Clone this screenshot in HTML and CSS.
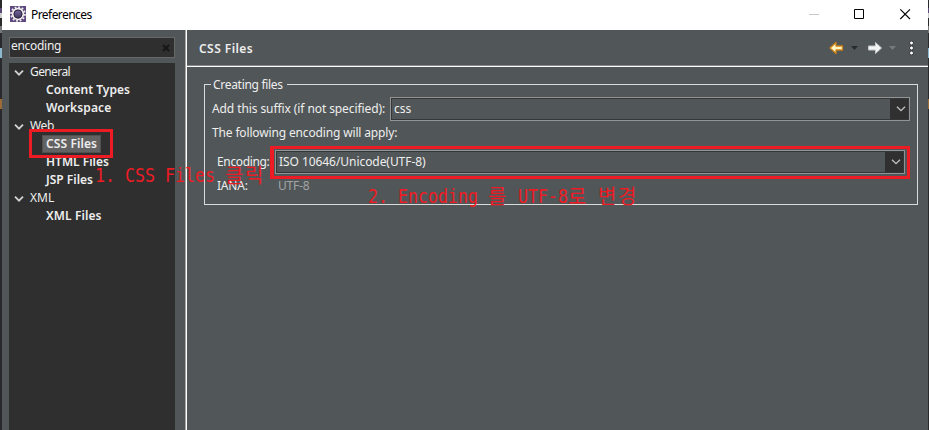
FILE: index.html
```
<!DOCTYPE html>
<html lang="ko">
<head>
<meta charset="utf-8">
<title>Preferences</title>
<link rel="stylesheet" href="styles.css">
</head>
<body>
<div class="window">
  <header class="titlebar">
    <svg class="app" width="16" height="16" viewBox="0 0 16 16">
      <defs><linearGradient id="g" x2="0" y2="1"><stop stop-color="#8070ac"/><stop offset="1" stop-color="#393050"/></linearGradient></defs>
      <rect width="16" height="16" fill="#5c487f"/>
      <circle cx="8" cy="8" r="6.8" fill="none" stroke="#eee" stroke-width="2" stroke-dasharray="1.8 1.76"/>
      <circle cx="8" cy="8" r="5.3" fill="url(#g)" stroke="#f3f1ee" stroke-width="1.7"/>
      <circle cx="8" cy="8" r="4" fill="none" stroke="#30283f"/>
    </svg>
    <span class="t title">Preferences</span>
    <svg class="controls" width="118" height="30" viewBox="0 0 118 30">
      <path d="M0 14.5h10" stroke="#c8c8c8"/>
      <path d="M45.500 9.500h9v9h-9z" fill="none" stroke="#000"/>
      <path d="M91.300 9.300l9.700 9.700M101 9.300l-9.700 9.700" stroke="#000" stroke-width="1.1"/>
    </svg>
  </header>
  <div class="content">
    <aside class="side">
      <div class="search"><span class="t query">encoding</span><svg width="8" height="8" viewBox="0 0 8 8"><path d="M1 1l6 6M7 1L1 7" stroke="#161616" stroke-width="1.8"/></svg></div>
      <nav class="tree">
        <div class="row"><svg class="chev" width="10" height="6" viewBox="0 0 10 6"><path d="M1 .7l4 4 4-4"/></svg><span class="t general">General</span></div>
        <div class="row leaf"><span class="t types">Content Types</span></div>
        <div class="row leaf"><span class="t workspace">Workspace</span></div>
        <div class="row"><svg class="chev" width="10" height="6" viewBox="0 0 10 6"><path d="M1 .7l4 4 4-4"/></svg><span class="t web">Web</span></div>
        <div class="row leaf"><div class="selected"><span class="t cssfiles">CSS Files</span></div></div>
        <div class="row leaf"><span class="t htmlfiles">HTML Files</span></div>
        <div class="row leaf"><span class="t jspfiles">JSP Files</span></div>
        <div class="row"><svg class="chev" width="10" height="6" viewBox="0 0 10 6"><path d="M1 .7l4 4 4-4"/></svg><span class="t xml">XML</span></div>
        <div class="row leaf"><span class="t xmlfiles">XML Files</span></div>
      </nav>
    </aside>
    <main class="page">
      <div class="head">
        <span class="t heading">CSS Files</span>
        <svg class="tools" width="88" height="18" viewBox="0 0 88 18">
          <path d="M1 9l6-5.500v3.500h6.500v4h-6.500v3.500z" fill="#fff3c4" stroke="#c98216" stroke-width="1.300" stroke-linejoin="round"/>
          <path d="M22 7h7l-3.500 4z" fill="#292b2c"/>
          <path d="M52.500 9l-6-5.500v3.500h-7v4h7v3.500z" fill="#f4f4f4" stroke="#c5c7c8" stroke-linejoin="round"/>
          <path d="M60 7h7l-3.500 4z" fill="#767a7d"/>
          <g fill="#fff" stroke="#333739"><circle cx="82.500" cy="4" r="2"/><circle cx="82.500" cy="9" r="2"/><circle cx="82.500" cy="14" r="2"/></g>
        </svg>
      </div>
      <section class="group">
        <div class="legend"><span class="t creating">Creating files</span></div>
        <div class="field suffix"><span class="t addlabel">Add this suffix (if not specified):</span><div class="combo first"><span class="t css">css</span><span class="drop"><svg width="10" height="6" viewBox="0 0 10 6"><path d="M1 .7l4 4 4-4"/></svg></span></div></div>
        <div class="note"><span class="t following">The following encoding will apply:</span></div>
        <div class="field enc"><span class="t enclabel">Encoding:</span><div class="combo second"><span class="t iso">ISO 10646/Unicode(UTF-8)</span><span class="drop"><svg width="10" height="6" viewBox="0 0 10 6"><path d="M1 .7l4 4 4-4"/></svg></span></div></div>
        <div class="iana"><span class="t ianalabel">IANA:</span><span class="t utf">UTF-8</span></div>
      </section>
    </main>
  </div>
</div>
<div class="mark markone"></div>
<div class="mark marktwo"></div>
<div class="callout one"><span class="latin w13">1. CSS Files </span><span class="hangul">클릭</span></div>
<div class="callout two"><span class="latin w12">2. Encoding </span><span class="hangul">를</span><span class="latin w6"> UTF-8</span><span class="hangul">로</span><span class="latin w1"> </span><span class="hangul">변경</span></div>
</body>
</html>
```
FILE: styles.css
```
* { box-sizing: border-box; }
body { margin: 0; width: 929px; height: 430px; overflow: hidden; background: linear-gradient(#292a2c 0 8px, #5b4a78 8px 13px, #ccc 13px 18px, #292a2c 18px 26px, #777 26px 33px, #292a2c 33px 48px, #8db9d0 48px 58px, #292a2c 58px 99px, #9b6b38 99px 109px, #292a2c 109px); font: 12px/18px "Noto Sans", "Noto Sans CJK KR", sans-serif; color: #eee; }
.window { margin: 0 1px 0 2px; height: 430px; background: #515658; display: flex; flex-direction: column; }
.t { white-space: pre; flex: none; display: block; }
svg { display: block; flex: none; }
.titlebar { height: 30px; background: #fff; color: #000; display: flex; align-items: center; padding-left: 8px; }
.app { margin-right: 5px; margin-top: -2px; }
.title { margin-top: -1px; letter-spacing: -.56px; }
.controls { margin-left: auto; margin-right: 1px; }
.content { flex: 1; display: flex; min-height: 0; }
.side { width: 183px; padding: 7px 10px 0 7px; display: flex; flex-direction: column; gap: 5px; }
.search { height: 21px; border: 1px solid #686868; background: #2f2f2f; display: flex; justify-content: space-between; align-items: center; padding: 0 4px 0 1px; }
.query { margin-top: -3px; letter-spacing: -.3px; }
.tree { flex: 1; background: #2f2f2f; }
.row { height: 18px; display: flex; align-items: center; padding-left: 5px; }
.row .t { margin-top: -1px; }
.chev { margin-right: 6px; margin-top: 2px; }
.general { letter-spacing: -.65px; letter-spacing: -.6px; }
.web { letter-spacing: -.3px; }
.chev path { fill: none; stroke: #d2d2d2; stroke-width: 1.8; }
.leaf { padding-left: 37px; font-weight: 600; }
.workspace, .xmlfiles { letter-spacing: .1px; }
.selected { margin-left: -4px; padding-left: 3px; width: 59px; height: 18px; border: 1px solid #505050; background: #626262; }
.cssfiles { letter-spacing: .1px; }
.page { flex: 1; border-left: 1px solid #aaa7a3; box-shadow: inset 1px 0 #fff; min-width: 0; }
.head { height: 37px; border-bottom: 1px solid #fff; box-shadow: inset 0 -1px #858889; margin-left: 1px; padding: 0 9px 0 12px; display: flex; align-items: center; justify-content: space-between; }
.heading { font-weight: 600; margin-top: 2px; letter-spacing: .45px; }
.tools { margin-right: 2px; }
.group { margin: 17px 10px 0 18px; height: 121px; border: 1px solid #d9dada; padding: 0 7px; }
.legend { width: 76px; margin: -9px 0 0 -1px; padding: 0 2px; background: #515658; height: 18px; }
.creating { letter-spacing: -.3px; }
.field { display: flex; align-items: center; }
.suffix { margin-top: 3px; height: 24px; justify-content: space-between; }
.addlabel { letter-spacing: -.09px; }
.following { letter-spacing: -.15px; }
.combo { border: 1px solid #929494; box-shadow: inset 0 0 0 1px #343637; height: 24px; padding: 1px; display: flex; justify-content: space-between; align-items: center; }
.combo .t { margin-left: 2px; }
.first { width: 520px; }
.drop { width: 18px; height: 100%; background: #303030; display: grid; place-content: center; }
.first .drop svg, .second .drop svg { margin-left: 3px; }
.drop path { fill: none; stroke: #c2c4c4; stroke-width: 1.3; }
.note { height: 18px; margin-top: 3px; }
.enc { height: 24px; margin: 8px 5px 0 5px; justify-content: space-between; }
.enclabel { letter-spacing: -.35px; }
.iso { letter-spacing: -.06px; }
.second { width: 630px; }
.iana { display: flex; margin: 3px 0 0 5px; }
.ianalabel { width: 61px; letter-spacing: -.2px; }
.utf { color: #a1a5a7; letter-spacing: -.2px; }
.mark { position: absolute; border: 3px solid #ed1c24; }
.markone { left: 29px; top: 129px; width: 84px; height: 29px; }
.marktwo { left: 270px; top: 146px; width: 640px; height: 33px; border-width: 3px 3px 3px 4px; }
.callout { position: absolute; display: flex; color: #ed1c24; height: 24px; line-height: 24px; white-space: pre; }
.one { left: 95px; top: 163px; }
.two { left: 368px; top: 184px; }
.latin { font-family: "DejaVu Sans Mono", monospace; font-size: 20px; transform: scaleX(.83); transform-origin: left; }
.hangul { font-family: "Noto Sans CJK KR", sans-serif; font-size: 20px; letter-spacing: 1.6px; }
.w13 { width: 130px; } .w12 { width: 120px; } .w6 { width: 60px; } .w1 { width: 10px; }
```
